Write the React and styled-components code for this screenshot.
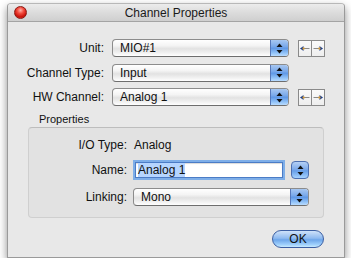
import React from "react";
import styled, { createGlobalStyle } from "styled-components";

const GlobalStyle = createGlobalStyle`
  body {
    margin: 0;
    background: #ffffff;
    font-family: "Liberation Sans", Arial, sans-serif;
    color: #111;
  }
`;

const Window = styled.div`
  width: 338px;
  height: 255px;
  margin: 3px 0 0 7px;
  box-sizing: border-box;
  border: 1px solid #9a9a9a;
  border-top-color: #b8b8b8;
  border-radius: 4px 4px 0 0;
  background: #e8e8e8;
  box-shadow: 0 4px 9px rgba(0, 0, 0, 0.45);
  display: flex;
  flex-direction: column;
`;

const TitleBar = styled.div`
  height: 21px;
  display: grid;
  grid-template-columns: 1fr auto 1fr;
  align-items: center;
  padding: 0 6px;
  background: linear-gradient(180deg, #ececec 0%, #dcdcdc 50%, #cfcfcf 100%);
  border-bottom: 1px solid #a4a4a4;
  border-radius: 3px 3px 0 0;
  font-size: 12px;
  color: #1a1a1a;
`;

const CloseButton = styled.span`
  width: 13px;
  height: 13px;
  border-radius: 50%;
  background: radial-gradient(circle at 50% 30%, #ffb0a8 0%, #f24a3c 35%, #c8120a 70%, #e8503c 100%);
  border: 1px solid #8a1a14;
  box-sizing: border-box;
`;

const Body = styled.div`
  flex: 1;
  display: flex;
  flex-direction: column;
  padding: 17px 20px 9px 0;
`;

const FormGrid = styled.div`
  display: grid;
  grid-template-columns: 96px 177px 27px;
  column-gap: 8px;
  row-gap: 6.5px;
  align-items: center;
  & > *:nth-child(3n + 3) {
    margin-left: 1px;
  }
`;

const Label = styled.span`
  font-size: 12px;
  text-align: right;
  white-space: nowrap;
`;

const PopupBox = styled.div`
  display: flex;
  height: 18px;
  width: ${({ $width }) => $width}px;
  box-sizing: border-box;
  border: 1px solid #8c8c8c;
  border-bottom-color: #6e6e6e;
  border-radius: 4px;
  overflow: hidden;
  background: linear-gradient(180deg, #ffffff 0%, #f4f4f4 35%, #e2e2e2 55%, #f1f1f1 80%, #ffffff 100%);
`;

const PopupText = styled.span`
  flex: 1;
  font-size: 12px;
  line-height: 16px;
  padding-left: 7px;
`;

const BlueArrows = styled.span`
  width: 17px;
  display: flex;
  align-items: center;
  justify-content: center;
  border-left: 1px solid #5677b8;
  background: linear-gradient(180deg, #a7c7f1 0%, #7aa9ea 40%, #5f98e6 52%, #8fc1f7 80%, #b9dcff 100%);
`;

const UpDown = () => (
  <svg width="7" height="11" viewBox="0 0 7 11">
    <path d="M3.5 0.5 L6.5 4 L0.5 4 Z" fill="#111" />
    <path d="M3.5 10.5 L6.5 7 L0.5 7 Z" fill="#111" />
  </svg>
);

const Popup = ({ value, width = 177 }) => (
  <PopupBox $width={width}>
    <PopupText>{value}</PopupText>
    <BlueArrows>
      <UpDown />
    </BlueArrows>
  </PopupBox>
);

const NavPair = styled.div`
  display: flex;
  height: 17px;
  width: 27px;
  box-sizing: border-box;
  border: 1px solid #8a8a8a;
  background: linear-gradient(180deg, #fafafa 0%, #eeeeee 100%);
`;

const NavButton = styled.span`
  flex: 1;
  display: flex;
  align-items: center;
  justify-content: center;
  &:first-child {
    border-right: 1px solid #8a8a8a;
  }
`;

const ArrowIcon = ({ dir }) => (
  <svg width="10" height="5" viewBox="0 0 10 5">
    {dir === "left" ? (
      <>
        <path d="M3 2.5 H9.5" stroke="#8a8a8a" strokeWidth="1" />
        <path d="M0 2.5 L3.5 0 L3.5 5 Z" fill="#1d3f8a" />
        <rect x="2.5" y="1.5" width="2" height="2" fill="#e0a030" />
      </>
    ) : (
      <>
        <path d="M0.5 2.5 H7" stroke="#8a8a8a" strokeWidth="1" />
        <path d="M10 2.5 L6.5 0 L6.5 5 Z" fill="#1d3f8a" />
        <rect x="5.5" y="1.5" width="2" height="2" fill="#e0a030" />
      </>
    )}
  </svg>
);

const Nav = () => (
  <NavPair>
    <NavButton>
      <ArrowIcon dir="left" />
    </NavButton>
    <NavButton>
      <ArrowIcon dir="right" />
    </NavButton>
  </NavPair>
);

const GroupTitle = styled.div`
  font-size: 11px;
  margin: 7px 0 2px 31px;
`;

const GroupBox = styled.div`
  margin-left: 20px;
  width: 296px;
  height: 91px;
  box-sizing: border-box;
  border: 1px solid #cfcfcf;
  border-top-color: #bdbdbd;
  border-radius: 4px;
  background: #e2e2e2;
  padding-top: 10px;
`;

const GroupGrid = styled.div`
  display: grid;
  grid-template-columns: 98px auto;
  column-gap: 6px;
  row-gap: 8px;
  align-items: center;
`;

const Value = styled.span`
  font-size: 12px;
  margin-left: 1px;
`;

const FieldRow = styled.div`
  display: flex;
  align-items: center;
  gap: 6px;
`;

const TextField = styled.div`
  width: 148px;
  height: 16px;
  margin: 2px 2px;
  box-sizing: border-box;
  border: 1px solid #4b7cc6;
  background: #ffffff;
  box-shadow: 0 0 0 2px #7eaee8, inset 0 1px 1px rgba(0, 0, 0, 0.15);
  font-size: 12px;
  line-height: 14px;
  padding-left: 2px;
`;

const Selected = styled.span`
  background: #b5d5ff;
`;

const Stepper = styled.span`
  width: 18px;
  height: 18px;
  box-sizing: border-box;
  display: flex;
  align-items: center;
  justify-content: center;
  border: 1px solid #4d6fb0;
  border-radius: 4px;
  background: linear-gradient(180deg, #b4d0f5 0%, #7eaaea 45%, #679ee8 55%, #a5d2ff 100%);
`;

const Footer = styled.div`
  display: flex;
  justify-content: flex-end;
  margin-top: 12px;
`;

const OkButton = styled.button`
  width: 52px;
  height: 18px;
  padding: 0;
  border: 1px solid #3c5fa3;
  border-radius: 9px;
  background: linear-gradient(180deg, #cfe2f9 0%, #8fbaf0 45%, #6ea6ea 55%, #9fd0fc 85%, #c8eaff 100%);
  font-family: "Liberation Sans", Arial, sans-serif;
  font-size: 12px;
  color: #111;
`;

export default function App() {
  return (
    <>
      <GlobalStyle />
      <Window>
        <TitleBar>
          <CloseButton />
          <span>Channel Properties</span>
          <span />
        </TitleBar>
        <Body>
          <FormGrid>
            <Label>Unit:</Label>
            <Popup value="MIO#1" />
            <Nav />
            <Label>Channel Type:</Label>
            <Popup value="Input" />
            <span />
            <Label>HW Channel:</Label>
            <Popup value="Analog 1" />
            <Nav />
          </FormGrid>
          <GroupTitle>Properties</GroupTitle>
          <GroupBox>
            <GroupGrid>
              <Label>I/O Type:</Label>
              <Value>Analog</Value>
              <Label>Name:</Label>
              <FieldRow>
                <TextField>
                  <Selected>Analog 1</Selected>
                </TextField>
                <Stepper>
                  <UpDown />
                </Stepper>
              </FieldRow>
              <Label>Linking:</Label>
              <Popup value="Mono" width={176} />
            </GroupGrid>
          </GroupBox>
          <Footer>
            <OkButton>OK</OkButton>
          </Footer>
        </Body>
      </Window>
    </>
  );
}
